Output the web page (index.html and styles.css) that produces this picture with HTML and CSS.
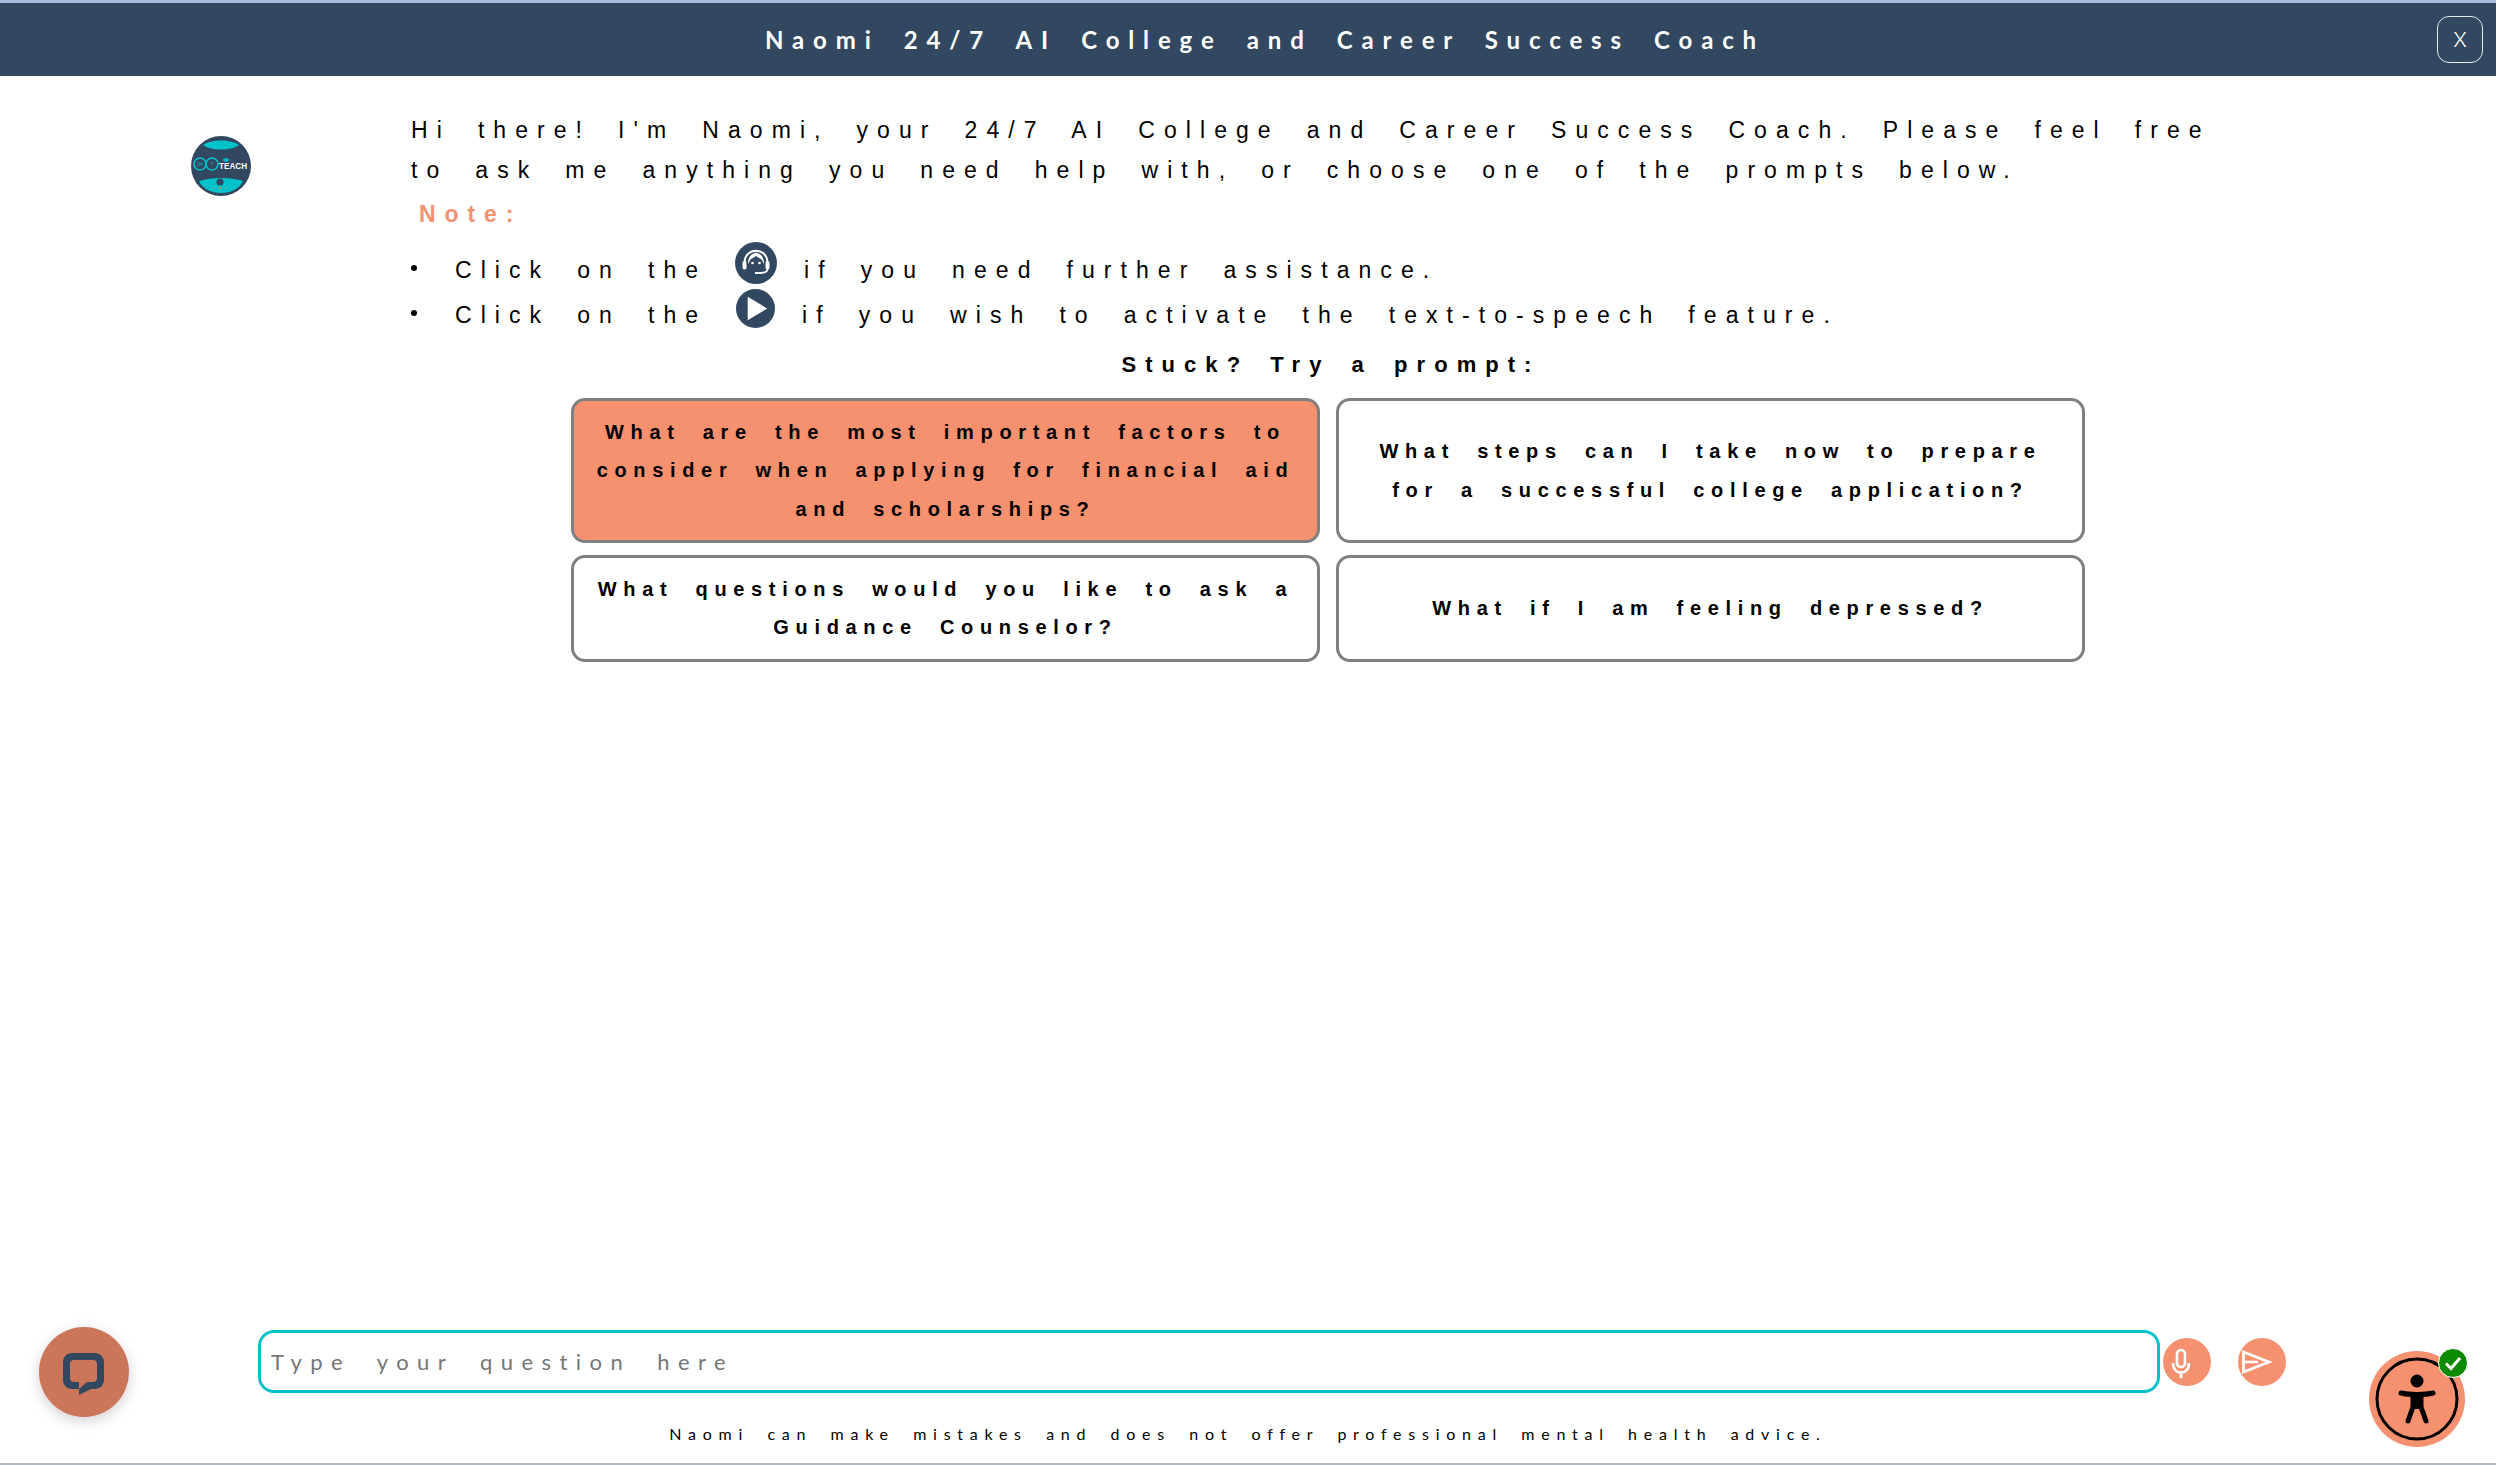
FILE: index.html
```html
<!DOCTYPE html>
<html lang="en">
<head>
<meta charset="utf-8">
<title>Naomi 24/7 AI College and Career Success Coach</title>
<link rel="stylesheet" href="styles.css">
</head>
<body>
<div class="app">
  <header class="topbar">
    <h1 class="topbar-title">Naomi 24/7 AI College and Career Success Coach</h1>
    <button class="close-btn" type="button">x</button>
  </header>
  <main class="chat">
    <svg class="logo" viewBox="0 0 60 60" aria-hidden="true">
      <circle cx="30" cy="30" r="30" fill="#324760"/>
      <path d="M12 9 C20 3 40 3 48 9 C40 15 20 15 12 9Z" fill="#00c2cb"/>
      <path d="M8 45 C20 41 40 41 52 45 C45 61 15 61 8 45Z" fill="#00c2cb"/>
      <circle cx="9" cy="28" r="6" fill="none" stroke="#00c2cb" stroke-width="1.6"/>
      <circle cx="21" cy="28" r="6" fill="none" stroke="#00c2cb" stroke-width="1.6"/>
      <text class="logo-mini" x="9" y="30">24</text>
      <text class="logo-mini" x="21" y="30">7</text>
      <path d="M31 24 L35 22 L39 24 L35 26Z" fill="#00c2cb"/>
      <text class="logo-text" x="28" y="33" textLength="28" lengthAdjust="spacingAndGlyphs">TEACH</text>
      <circle cx="29" cy="46" r="3.6" fill="#324760"/>
      <circle cx="23" cy="52" r="0.8" fill="#f69170"/>
      <circle cx="29" cy="52" r="1" fill="#f69170"/>
      <circle cx="35" cy="52" r="0.8" fill="#f69170"/>
    </svg>
    <div class="content">
      <p class="intro">Hi there! I'm Naomi, your 24/7 AI College and Career Success Coach. Please feel free to ask me anything you need help with, or choose one of the prompts below.</p>
      <p class="note">Note:</p>
      <ul class="tips">
        <li class="tip tip-first">
          <span class="tip-text">Click on the</span>
          <svg class="tip-icon headset" viewBox="0 0 42 42" aria-hidden="true">
            <circle cx="21" cy="21" r="21" fill="#324760"/>
            <path d="M9.5 21 C9.5 4.5 32.5 4.5 32.5 21" fill="none" stroke="#fff" stroke-width="2"/>
            <path d="M13 22 C13 13 18 11.5 21 10.5 C24 11.5 29 13 29 22 L26.5 17.5 L21 14 L15.5 17.5Z" fill="#fff"/>
            <rect x="7.5" y="19" width="4" height="8.5" rx="1.8" fill="#fff"/>
            <rect x="30.5" y="19" width="4" height="8.5" rx="1.8" fill="#fff"/>
            <circle cx="17.5" cy="21" r="1.3" fill="#fff"/>
            <circle cx="24.5" cy="21" r="1.3" fill="#fff"/>
            <path d="M32.5 27 C32.5 30.5 29 31 20 31" fill="none" stroke="#fff" stroke-width="1.8"/>
          </svg>
          <span class="tip-text">if you need further assistance.</span>
        </li>
        <li class="tip">
          <span class="tip-text">Click on the</span>
          <svg class="tip-icon play" viewBox="0 0 40 40" aria-hidden="true">
            <circle cx="20" cy="20" r="20" fill="#324760"/>
            <path d="M12 8 L32 20 L12 32Z" fill="#fff"/>
          </svg>
          <span class="tip-text">if you wish to activate the text-to-speech feature.</span>
        </li>
      </ul>
      <section class="prompts">
        <h2 class="prompts-title">Stuck? Try a prompt:</h2>
        <div class="prompt-grid">
          <button class="prompt prompt-active" type="button">What are the most important factors to consider when applying for financial aid and scholarships?</button>
          <button class="prompt" type="button">What steps can I take now to prepare for a successful college application?</button>
          <button class="prompt" type="button">What questions would you like to ask a Guidance Counselor?</button>
          <button class="prompt" type="button">What if I am feeling depressed?</button>
        </div>
      </section>
    </div>
  </main>
  <footer class="composer-wrap">
    <div class="composer">
      <input class="question" type="text" placeholder="Type your question here">
      <button class="round-btn mic-btn" type="button" aria-label="Microphone">
        <svg viewBox="0 0 48 48" aria-hidden="true">
          <rect x="14" y="12" width="8" height="17" rx="4" fill="none" stroke="#fff" stroke-width="2.6"/>
          <path d="M10 25 C10 38 26 38 26 25" fill="none" stroke="#fff" stroke-width="2.6"/>
          <path d="M18 33 V40" stroke="#fff" stroke-width="3"/>
        </svg>
      </button>
      <button class="round-btn send-btn" type="button" aria-label="Send">
        <svg viewBox="0 0 48 48" aria-hidden="true">
          <path d="M5.5 14 L31 24 L5.5 34 Z" fill="none" stroke="#fff" stroke-width="2.8" stroke-linejoin="miter"/>
          <path d="M6 24 H20" stroke="#fff" stroke-width="2.6"/>
        </svg>
      </button>
    </div>
    <p class="disclaimer">Naomi can make mistakes and does not offer professional mental health advice.</p>
  </footer>
  <button class="chat-widget" type="button" aria-label="Live chat">
    <svg viewBox="0 0 90 90" aria-hidden="true">
      <path fill-rule="evenodd" d="M33 26 H56 C61 26 65 30 65 35 V53 C65 58 61 62 56 62 H52 L40 68 V62 H33 C28 62 24 58 24 53 V35 C24 30 28 26 33 26Z M35 33 C32.5 33 31 34.5 31 37 V51 C31 53.5 32.5 55 35 55 H40 V62 L48 55 H54 C56.5 55 58 53.5 58 51 V37 C58 34.5 56.5 33 54 33Z" fill="#324760"/>
    </svg>
  </button>
  <button class="a11y-widget" type="button" aria-label="Accessibility">
    <svg viewBox="0 0 96 96" aria-hidden="true">
      <circle cx="48" cy="48" r="40" fill="none" stroke="#000" stroke-width="3"/>
      <circle cx="48" cy="30" r="6.5" fill="#000"/>
      <path d="M32 42 C40 44 56 44 64 42" fill="none" stroke="#000" stroke-width="5" stroke-linecap="round"/>
      <path d="M44 44 L44 56 L39 70 M52 44 L52 56 L57 70" fill="none" stroke="#000" stroke-width="5" stroke-linecap="round" stroke-linejoin="round"/>
      <path d="M43 44 H53 V58 H43Z" fill="#000"/>
    </svg>
    <span class="a11y-badge">
      <svg viewBox="0 0 28 28" aria-hidden="true">
        <path d="M7 14.5 L12 19.5 L21 9" fill="none" stroke="#fff" stroke-width="3"/>
      </svg>
    </span>
  </button>
</div>
</body>
</html>
```
FILE: styles.css
```css
* { box-sizing: border-box; }
html, body { margin: 0; height: 100%; overflow: hidden; background: #fff; }
body { font-family: "Liberation Sans", Arial, sans-serif; color: #000; }
.app {
  position: relative;
  display: flex;
  flex-direction: column;
  height: 100vh;
  border-bottom: 2px solid #b3bac4;
}
.topbar {
  flex: none;
  display: flex;
  align-items: center;
  justify-content: center;
  height: 76px;
  padding-left: 34px;
  background: #324760;
  border-top: 3px solid #a9bbdc;
  position: relative;
}
.topbar-title {
  margin: 0;
  font-family: Lato, sans-serif;
  font-weight: 700;
  font-size: 24px;
  letter-spacing: 8.85px;
  word-spacing: 9.5px;
  color: #fff;
}
.close-btn {
  position: absolute;
  top: 13px;
  right: 13px;
  width: 46px;
  height: 47px;
  padding: 0 0 9px;
  border: 1.5px solid #e6ebf0;
  border-radius: 12px;
  background: transparent;
  color: #fff;
  font-family: Lato, sans-serif;
  font-size: 29px;
  font-weight: 300;
}
.chat {
  flex: 1;
  display: flex;
  align-items: flex-start;
  padding: 35px 0 0 191px;
  min-height: 0;
}
.logo { flex: none; width: 60px; height: 60px; margin: 25px 160px 0 0; overflow: visible; }
.logo-text { font-family: "Liberation Sans", sans-serif; font-size: 9px; font-weight: 700; fill: #fff; }
.logo-mini { font-family: "Liberation Sans", sans-serif; font-size: 5px; fill: #00c2cb; text-anchor: middle; }
.content { flex: none; width: 1840px; }
.intro {
  margin: 0;
  font-size: 23px;
  line-height: 39.6px;
  letter-spacing: 9.06px;
  word-spacing: 11.6px;
}
.note {
  margin: 10px 0 0 8px;
  font-size: 23px;
  line-height: 28px;
  font-weight: 700;
  letter-spacing: 8.9px;
  color: #f69170;
}
.tips { list-style: none; margin: 14px 0 0; padding: 0; }
.tip {
  display: flex;
  align-items: flex-end;
  margin-top: 5px;
  height: 40px;
  padding-left: 44px;
  position: relative;
  font-size: 23px;
  line-height: 28px;
}
.tip-first { height: 42px; margin-top: 0; }
.tip::before {
  content: "";
  position: absolute;
  left: 0;
  bottom: 13px;
  width: 6px;
  height: 6px;
  border-radius: 50%;
  background: #000;
}
.tip-text { letter-spacing: 9.06px; word-spacing: 11.6px; }
.tip-icon { flex: none; margin: 0 27px 0 28px; }
.tip-icon.headset { width: 42px; height: 42px; }
.tip-icon.play { width: 39px; height: 39px; margin: 0 27px 1px 29px; }
.prompts { margin: 22px 0 0 160px; width: 1514px; }
.prompts-title {
  margin: 0 0 19px;
  padding-left: 6px;
  font-size: 22px;
  line-height: 28px;
  font-weight: 700;
  letter-spacing: 9.05px;
  word-spacing: 6px;
  text-align: center;
}
.prompt-grid {
  display: grid;
  grid-template-columns: 749px 749px;
  column-gap: 16px;
  row-gap: 12px;
}
.prompt {
  padding: 11.75px 8px;
  border: 3px solid #808080;
  border-radius: 14px;
  background: #fff;
  color: #000;
  font-family: "Liberation Sans", sans-serif;
  font-size: 20px;
  font-weight: 700;
  line-height: 38.5px;
  letter-spacing: 6.66px;
  word-spacing: 10px;
  text-align: center;
}
.prompt-active { background: #f69170; }
.composer-wrap { flex: none; padding-bottom: 19px; }
.composer {
  display: flex;
  align-items: center;
  padding-left: 258px;
  height: 63px;
}
.question {
  width: 1902px;
  height: 63px;
  margin-right: 3px;
  padding: 0 10px;
  border: 3px solid #00c2cb;
  border-radius: 16px;
  background: #fff;
  outline: none;
  font-family: Lato, sans-serif;
  font-size: 22px;
  letter-spacing: 8.45px;
  word-spacing: 12px;
}
.question::placeholder { color: #757575; opacity: 1; }
.round-btn {
  flex: none;
  width: 48px;
  height: 48px;
  padding: 0;
  border: 0;
  border-radius: 50%;
  background: #f69170;
}
.round-btn svg { display: block; width: 48px; height: 48px; }
.send-btn { margin-left: 27px; }
.disclaimer {
  margin: 31px 0 0;
  font-family: Lato, sans-serif;
  font-size: 16px;
  line-height: 20px;
  letter-spacing: 6.75px;
  word-spacing: 7.5px;
  text-align: center;
}
.chat-widget {
  position: absolute;
  left: 39px;
  top: 1327px;
  width: 90px;
  height: 90px;
  padding: 0;
  border: 0;
  border-radius: 50%;
  background: #cb7659;
  box-shadow: 0 4px 14px rgba(0, 0, 0, 0.18);
}
.chat-widget svg { display: block; width: 90px; height: 90px; }
.a11y-widget {
  position: absolute;
  left: 2369px;
  top: 1351px;
  width: 96px;
  height: 96px;
  padding: 0;
  border: 0;
  border-radius: 50%;
  background: #f69170;
}
.a11y-widget > svg { display: block; width: 96px; height: 96px; }
.a11y-badge {
  position: absolute;
  top: -3px;
  right: -3px;
  width: 30px;
  height: 30px;
  border: 1.5px solid #fff;
  border-radius: 50%;
  background: #0e8a00;
}
.a11y-badge svg { display: block; width: 100%; height: 100%; }
```
